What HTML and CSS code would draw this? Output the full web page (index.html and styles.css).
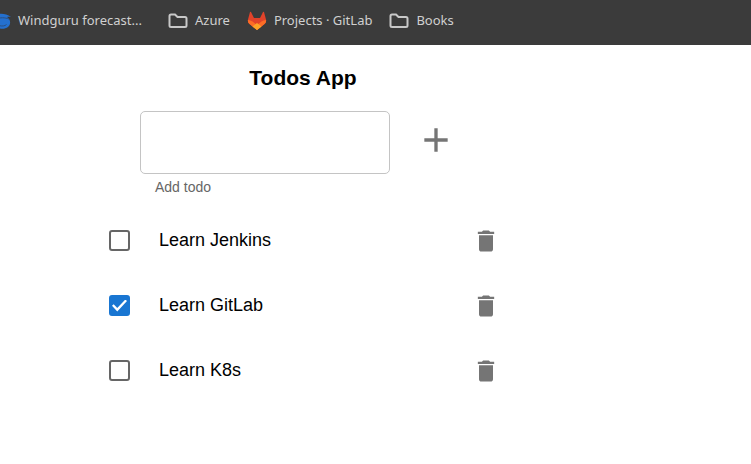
FILE: index.html
```html
<!DOCTYPE html>
<html lang="en">
<head>
<meta charset="utf-8">
<title>Todos App</title>
<link rel="stylesheet" href="styles.css">
</head>
<body>
<nav class="bookmarks" aria-label="Bookmarks">
  <a class="bookmark bookmark-first" href="#windguru">
    <svg class="site-icon" viewBox="0 0 20 20" aria-hidden="true"><path fill="#2470cf" d="M1 8C3 2 13 1 20 6C18 5.500 17 5.500 16 6C20 9 20 13 17 16C13 19 6 18 3 14C1 12 1 10 1 8Z"/><path d="M5 8.500C9 6 14 6.500 18 8M8 14.500C11 15.500 14 15 15.500 13.500" fill="none" stroke="#2c4f80" stroke-width="1"/></svg>
    <span>Windguru forecast...</span>
  </a>
  <a class="bookmark bookmark-azure" href="#azure">
    <svg class="folder" viewBox="0 0 20 16" aria-hidden="true"><path d="M1.5 3Q1.5 1.5 3 1.5H7L9.5 4H17Q18.5 4 18.5 5.500V12.500Q18.500 14 17 14H3Q1.500 14 1.500 12.500Z"/></svg>
    <span>Azure</span>
  </a>
  <a class="bookmark" href="#gitlab">
    <svg class="site-icon" viewBox="0 0 20 20" aria-hidden="true"><path fill="#e2432a" d="M4 1L7 7H13L16 1Q16.500 .5 17 1L19 8.500Q19.700 11 17.500 13L10 19L2.500 13Q.3 11 1 8.500L3 1Q3.500 .5 4 1Z"/><path fill="#fc6d26" d="M1 9Q3.500 9 5.500 10.500L10 14L14.500 10.500Q16.500 9 19 9Q19.500 11.500 17.500 13L10 19L2.500 13Q.5 11.500 1 9Z"/><path fill="#fca326" d="M5.500 15.500L10 12L14.500 15.500L10 19Z"/></svg>
    <span>Projects · GitLab</span>
  </a>
  <a class="bookmark" href="#books">
    <svg class="folder" viewBox="0 0 20 16" aria-hidden="true"><path d="M1.5 3Q1.5 1.5 3 1.5H7L9.5 4H17Q18.5 4 18.5 5.500V12.500Q18.500 14 17 14H3Q1.500 14 1.500 12.500Z"/></svg>
    <span>Books</span>
  </a>
</nav>
<main class="app">
  <h1>Todos App</h1>
  <form class="add-form">
    <div class="field">
      <input class="text-input" id="todo" type="text">
      <label for="todo">Add todo</label>
    </div>
    <button class="icon-button" type="button" aria-label="Add">
      <svg class="plus" viewBox="0 0 24 24" aria-hidden="true"><path d="M19 13h-6v6h-2v-6H5v-2h6V5h2v6h6z"/></svg>
    </button>
  </form>
  <ul class="todos">
    <li>
      <input class="check" type="checkbox" id="jenkins">
      <label for="jenkins">Learn Jenkins</label>
      <button class="icon-button" type="button" aria-label="Delete Learn Jenkins"><svg class="trash" viewBox="0 0 24 24" aria-hidden="true"><path d="M6 19c0 1.100.9 2 2 2h8c1.100 0 2-.9 2-2V7H6zM19 4h-3.500l-1-1h-5l-1 1H5v2h14z"/></svg></button>
    </li>
    <li>
      <input class="check" type="checkbox" id="gitlab-task" checked>
      <label for="gitlab-task">Learn GitLab</label>
      <button class="icon-button" type="button" aria-label="Delete Learn GitLab"><svg class="trash" viewBox="0 0 24 24" aria-hidden="true"><path d="M6 19c0 1.100.9 2 2 2h8c1.100 0 2-.9 2-2V7H6zM19 4h-3.500l-1-1h-5l-1 1H5v2h14z"/></svg></button>
    </li>
    <li>
      <input class="check" type="checkbox" id="k8s">
      <label for="k8s">Learn K8s</label>
      <button class="icon-button" type="button" aria-label="Delete Learn K8s"><svg class="trash" viewBox="0 0 24 24" aria-hidden="true"><path d="M6 19c0 1.100.9 2 2 2h8c1.100 0 2-.9 2-2V7H6zM19 4h-3.500l-1-1h-5l-1 1H5v2h14z"/></svg></button>
    </li>
  </ul>
</main>
</body>
</html>
```
FILE: styles.css
```css
* {
  box-sizing: border-box;
}

body {
  margin: 0;
  background: #fff;
  color: #000;
  font-family: "Liberation Sans", Arial, sans-serif;
}

.bookmarks {
  display: flex;
  gap: 17px;
  padding: 10px 0 13px;
  overflow: hidden;
  background: #3b3b3b;
}

.bookmark {
  display: flex;
  flex: none;
  align-items: center;
  gap: 7px;
  color: #d0d0d0;
  font: 13px/20px "Noto Sans", sans-serif;
  text-decoration: none;
}

.bookmark span {
  padding-bottom: 2px;
}

.bookmark-first {
  margin-left: -9px;
}

.bookmark-azure {
  margin-left: 9px;
}

.site-icon {
  width: 20px;
  height: 20px;
}

.folder {
  width: 20px;
  height: 16px;
  fill: none;
  stroke: #c8c8c8;
  stroke-width: 2;
}

.app {
  max-width: 606px;
  padding: 20px 108px;
}

h1 {
  margin: 0;
  font-size: 21px;
  line-height: 26px;
  text-align: center;
}

.add-form {
  display: flex;
  align-items: flex-start;
  gap: 26px;
  margin-top: 20px;
  padding-left: 32px;
}

.field {
  flex: 0 1 250px;
}

.text-input {
  display: block;
  width: 100%;
  height: 63px;
  padding: 0 16px;
  border: 1px solid #c4c4c4;
  border-radius: 5px;
  background: #fff;
  font: inherit;
  font-size: 18px;
}

.field label {
  display: block;
  padding: 3px 15px 1px;
  color: #666;
  font-size: 14px;
  line-height: 20px;
}

.icon-button {
  display: block;
  padding: 0;
  border: 0;
  background: none;
  color: #757575;
}

.add-form .icon-button {
  margin-top: 9px;
}

.icon-button svg {
  display: block;
  fill: currentColor;
}

.plus {
  width: 40px;
  height: 40px;
}

.trash {
  width: 28px;
  height: 28px;
}

.todos {
  margin: 10px 0 0;
  padding: 0;
  list-style: none;
}

.todos li {
  display: flex;
  align-items: center;
  height: 65px;
}

.todos label {
  flex: 1;
  margin-left: 29px;
  padding-bottom: 2px;
  font-size: 18px;
  line-height: 28px;
}

.todos .icon-button {
  margin-right: -2px;
}

.check {
  appearance: none;
  width: 21px;
  height: 21px;
  margin: 0 0 0 1px;
  border: 2px solid #666;
  border-radius: 3px;
  background: #fff;
}

.check:checked {
  display: grid;
  place-items: center;
  border-color: #1976d2;
  background: #1976d2;
}

.check:checked::before {
  content: "";
  width: 15px;
  height: 12px;
  background: #fff;
  clip-path: polygon(0 52%, 11% 40%, 35% 70%, 89% 0, 100% 12%, 35% 100%);
}
```
